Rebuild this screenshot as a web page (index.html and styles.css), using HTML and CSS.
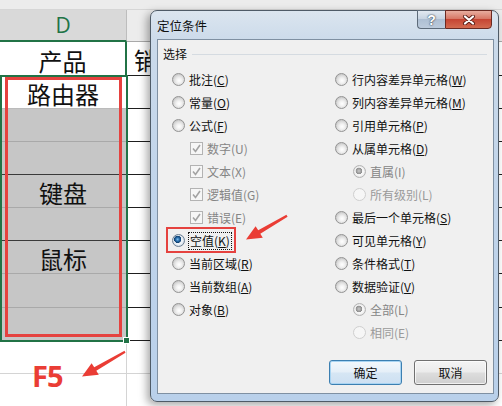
FILE: index.html
```html
<!DOCTYPE html>
<html lang="zh-CN">
  <head>
    <meta charset="UTF-8" />
    <title>定位条件</title>
    <link rel="stylesheet" href="styles.css">
  </head>
  <body>
    <div class="screen">
      <div class="sheet">
        <div class="topbar"></div>
        <div class="row head">
          <div class="cell d">D</div>
          <div class="cell e"></div>
        </div>
        <div class="row r-title">
          <div class="cell d">产品</div>
          <div class="cell e">销</div>
        </div>
        <div class="row r1"><div class="cell d">路由器</div><div class="cell e"></div></div>
        <div class="row r2"><div class="cell d sel line-light"></div><div class="cell e"></div></div>
        <div class="row r2"><div class="cell d sel line-dark"></div><div class="cell e"></div></div>
        <div class="row r2"><div class="cell d sel line-light">键盘</div><div class="cell e"></div></div>
        <div class="row r2"><div class="cell d sel line-dark"></div><div class="cell e"></div></div>
        <div class="row r2"><div class="cell d sel line-light">鼠标</div><div class="cell e"></div></div>
        <div class="row r2 tall"><div class="cell d sel line-light"></div><div class="cell e"></div></div>
        <div class="row r2"><div class="cell d sel"></div><div class="cell e"></div></div>
        <div class="row blank"><div class="cell d"></div><div class="cell e"></div></div>
        <div class="row blank"><div class="cell d"></div><div class="cell e"></div></div>
      </div>

      <div class="selection"></div>
      <div class="fill-handle"></div>
      <div class="mark-cells"></div>
      <div class="f5">F5</div>

      <div class="dialog">
        <div class="titlebar">
          <span class="title">定位条件</span>
          <div class="caption-btns">
            <span class="cap help">?</span>
            <span class="cap close">
              <svg width="14" height="10" viewBox="0 0 14 10">
                <path d="M3 1.5 L11 8.5 M11 1.5 L3 8.5" stroke="#5a1d16" stroke-width="4" stroke-linecap="round"/>
                <path d="M3 1.5 L11 8.5 M11 1.5 L3 8.5" stroke="#ffffff" stroke-width="2.2" stroke-linecap="round"/>
              </svg>
            </span>
          </div>
        </div>
        <div class="client">
          <div class="group-head">
            <span class="group-label">选择</span>
            <div class="group-line"></div>
          </div>
          <div class="options">
            <div class="col left">
              <div class="opt"><span class="radio"></span><span>批注(<u>C</u>)</span></div>
              <div class="opt"><span class="radio"></span><span>常量(<u>O</u>)</span></div>
              <div class="opt"><span class="radio"></span><span>公式(<u>F</u>)</span></div>
              <div class="opt sub dis"><span class="check"><svg width="11" height="11" viewBox="0 0 11 11"><path d="M2 5.5 L4.5 8.5 L9 2" fill="none" stroke="#a3a3a3" stroke-width="1.6"/></svg></span><span>数字(U)</span></div>
              <div class="opt sub dis"><span class="check"><svg width="11" height="11" viewBox="0 0 11 11"><path d="M2 5.5 L4.5 8.5 L9 2" fill="none" stroke="#a3a3a3" stroke-width="1.6"/></svg></span><span>文本(X)</span></div>
              <div class="opt sub dis"><span class="check"><svg width="11" height="11" viewBox="0 0 11 11"><path d="M2 5.5 L4.5 8.5 L9 2" fill="none" stroke="#a3a3a3" stroke-width="1.6"/></svg></span><span>逻辑值(G)</span></div>
              <div class="opt sub dis"><span class="check"><svg width="11" height="11" viewBox="0 0 11 11"><path d="M2 5.5 L4.5 8.5 L9 2" fill="none" stroke="#a3a3a3" stroke-width="1.6"/></svg></span><span>错误(E)</span></div>
              <div class="opt"><span class="radio on"></span><span class="focus">空值(<u>K</u>)</span></div>
              <div class="opt"><span class="radio"></span><span>当前区域(<u>R</u>)</span></div>
              <div class="opt"><span class="radio"></span><span>当前数组(<u>A</u>)</span></div>
              <div class="opt"><span class="radio"></span><span>对象(<u>B</u>)</span></div>
            </div>
            <div class="col right">
              <div class="opt"><span class="radio"></span><span>行内容差异单元格(<u>W</u>)</span></div>
              <div class="opt"><span class="radio"></span><span>列内容差异单元格(<u>M</u>)</span></div>
              <div class="opt"><span class="radio"></span><span>引用单元格(<u>P</u>)</span></div>
              <div class="opt"><span class="radio"></span><span>从属单元格(<u>D</u>)</span></div>
              <div class="opt sub dis"><span class="radio dis-on"></span><span>直属(I)</span></div>
              <div class="opt sub dis light"><span class="radio dis"></span><span>所有级别(L)</span></div>
              <div class="opt"><span class="radio"></span><span>最后一个单元格(<u>S</u>)</span></div>
              <div class="opt"><span class="radio"></span><span>可见单元格(<u>Y</u>)</span></div>
              <div class="opt"><span class="radio"></span><span>条件格式(<u>T</u>)</span></div>
              <div class="opt"><span class="radio"></span><span>数据验证(<u>V</u>)</span></div>
              <div class="opt sub dis"><span class="radio dis-on"></span><span>全部(L)</span></div>
              <div class="opt sub dis light"><span class="radio dis"></span><span>相同(E)</span></div>
            </div>
          </div>
          <div class="actions">
            <button class="btn default">确定</button>
            <button class="btn">取消</button>
          </div>
        </div>
      </div>

      <div class="mark-option"></div>
      <svg class="arrows" width="502" height="406" viewBox="0 0 502 406">
        <polygon points="124.5,350.8 94.2,367.2 91.6,363.2 82,376.5 98.8,374.8 96.3,370.8 125.5,352.8" fill="#ea3d35"/>
        <polygon points="286.4,214.8 258.2,230.3 255.6,226.3 246,239.5 262.8,237.8 260.3,233.8 287.6,216.8" fill="#ea3d35"/>
      </svg>
    </div>
  </body>
</html>
```

FILE: styles.css
```css
body {
  margin: 0;
  font-family: "Noto Sans CJK SC", sans-serif;
}
.screen {
  position: relative;
  width: 502px;
  height: 406px;
  overflow: hidden;
  background: #fff;
}

/* spreadsheet */
.topbar {
  height: 10px;
  background: #ececec;
  border-bottom: 1px solid #d6d6d6;
  box-sizing: border-box;
}
.row {
  display: flex;
  height: 33px;
}
.cell {
  box-sizing: border-box;
  display: flex;
  align-items: center;
  font-size: 24px;
  color: #111;
  border-bottom: 1px solid #d4d4d4;
}
.cell.d {
  width: 127px;
  justify-content: center;
  border-right: 1px solid #d4d4d4;
  padding-top: 3px;
}
.cell.e {
  flex: 1;
  padding-left: 7px;
  padding-top: 2px;
}
.head {
  height: 32px;
}
.head .cell.d {
  background: #d9d9d9;
  color: #217346;
  font-family: "Open Sans", "Liberation Sans", sans-serif;
  font-size: 21px;
  padding-top: 0;
  border-bottom: 2px solid #217346;
  border-right-color: #bdbdbd;
}
.head .cell.e {
  background: #ececec;
  border-bottom: 1px solid #a9a9a9;
}
.r-title {
  height: 34px;
}
.r-title .cell.d {
  border-right: 2px solid #217346;
}
.r-title .cell.e,
.r1 .cell.e,
.r2 .cell.e {
  border-bottom-color: #1e1e1e;
}
.r1 .cell.d {
  border-bottom-color: #bbbbbb;
}
.tall {
  height: 34px;
}
.cell.sel {
  background: #c6c6c6;
  border-bottom-color: #c6c6c6;
}
.cell.sel.line-light {
  border-bottom-color: #a9a9a9;
}
.cell.sel.line-dark {
  border-bottom-color: #3a3a3a;
}

/* overlays on the sheet */
.selection {
  position: absolute;
  left: 0;
  top: 75px;
  width: 128px;
  height: 267px;
  border: 2px solid #217346;
  box-sizing: border-box;
}
.fill-handle {
  position: absolute;
  left: 123px;
  top: 337px;
  width: 5px;
  height: 5px;
  background: #217346;
  border: 1px solid #fff;
}
.mark-cells {
  position: absolute;
  left: 5px;
  top: 77px;
  width: 117px;
  height: 260px;
  border: 3px solid #e5423f;
  box-sizing: border-box;
}
.f5 {
  position: absolute;
  left: 32px;
  top: 358px;
  font-family: "Noto Sans", sans-serif;
  font-weight: bold;
  font-size: 29px;
  line-height: 36px;
  letter-spacing: -1px;
  color: #ea3d35;
}

/* dialog window */
.dialog {
  position: absolute;
  left: 150px;
  top: 10px;
  width: 349px;
  height: 392px;
  box-sizing: border-box;
  border: 1px solid #4f5b67;
  border-radius: 7px;
  background: linear-gradient(180deg, #dbe5ef 0%, #cbdaea 8%, #c2d5ea 40%, #b9d0ea 100%);
  box-shadow: -3px 3px 8px rgba(0, 0, 0, 0.35);
  display: flex;
  flex-direction: column;
  padding: 0 4px 7px 6px;
}
.titlebar {
  height: 28px;
  display: flex;
  align-items: center;
  position: relative;
}
.title {
  font-size: 12.5px;
  color: #111;
  padding-top: 1px;
}
.caption-btns {
  position: absolute;
  right: 2px;
  top: -1px;
  display: flex;
}
.cap {
  height: 19px;
  box-sizing: border-box;
  display: flex;
  align-items: center;
  justify-content: center;
  border: 1px solid #5d6b7a;
}
.help {
  width: 28px;
  border-right: none;
  border-radius: 0 0 0 4px;
  background: linear-gradient(180deg, #e2e9f1 0%, #c7d4e2 45%, #aebfd3 50%, #bccbdc 100%);
  color: #fff;
  font-family: "Liberation Sans", sans-serif;
  font-weight: bold;
  font-size: 14px;
  text-shadow: 0 0 2px #34414f, 0 0 1px #34414f;
}
.close {
  width: 47px;
  border-color: #6b2a22;
  border-radius: 0 0 4px 0;
  background: linear-gradient(180deg, #e8ad9f 0%, #d77866 45%, #c64533 50%, #d36a4f 100%);
}
.client {
  flex: 1;
  background: #f0f0f0;
  border: 1px solid #7f90a2;
  display: flex;
  flex-direction: column;
  font-size: 12px;
  line-height: 16px;
  color: #111;
}
.group-head {
  height: 28px;
  display: flex;
  align-items: center;
  padding: 0 6px 0 5px;
}
.group-line {
  flex: 1;
  height: 0;
  margin-left: 5px;
  border-top: 1px solid #d5dbe1;
}
.options {
  display: flex;
}
.col {
  display: flex;
  flex-direction: column;
}
.col.left {
  width: 177px;
  padding-left: 14px;
  box-sizing: border-box;
}
.opt {
  height: 23px;
  display: flex;
  align-items: center;
  gap: 4px;
  white-space: nowrap;
}
.opt.sub {
  margin-left: 18px;
}
.opt.dis {
  color: #858585;
}
.opt.light {
  color: #9a9a9a;
}
.opt u {
  text-underline-offset: 1px;
}
.focus {
  outline: 1px dotted #111;
  outline-offset: 0;
  padding: 0 1px;
}

/* windows 7 style radio and check */
.radio {
  width: 13px;
  height: 13px;
  box-sizing: border-box;
  border-radius: 50%;
  border: 1px solid #939393;
  background: radial-gradient(circle at 55% 60%, #ffffff 0, #f2f2f2 2.5px, #dcdcdc 5px, #cdcdcd 6px);
  flex: none;
}
.radio.on {
  border-color: #6c7f93;
  background:
    radial-gradient(circle at 42% 40%, #7fc0ee 0, #2a6fae 1.8px, #0d3e6c 3.4px, rgba(13, 62, 108, 0) 3.8px),
    radial-gradient(circle, #eef3f8 0 4px, #c8d3de 6px);
}
.radio.dis-on {
  border-color: #b4b4b4;
  background:
    radial-gradient(circle at 45% 45%, #c9c9c9 0, #8f8f8f 3px, rgba(143, 143, 143, 0) 3.6px),
    radial-gradient(circle, #f7f7f7 0 4px, #dedede 6px);
}
.radio.dis {
  border-color: #cfcfcf;
  background: #f6f6f6;
}
.check {
  width: 13px;
  height: 13px;
  box-sizing: border-box;
  border: 1px solid #b3b3b3;
  background: #f6f6f6;
  display: flex;
  align-items: center;
  justify-content: center;
  flex: none;
}

.actions {
  display: flex;
  justify-content: flex-end;
  gap: 12px;
  padding-right: 6px;
  margin-top: 16px;
}
.btn {
  width: 73px;
  height: 25px;
  font-family: "Noto Sans CJK SC", sans-serif;
  font-size: 12px;
  color: #111;
  border: 1px solid #707070;
  border-radius: 3px;
  background: linear-gradient(180deg, #f4f4f4 0%, #ebebeb 48%, #dddddd 52%, #cfcfcf 100%);
  box-shadow: inset 0 0 0 1px rgba(255, 255, 255, 0.7);
  padding: 0;
}
.btn.default {
  border-color: #3c7fb1;
  background: linear-gradient(180deg, #f3f8fc 0%, #e5eff8 48%, #d6e6f4 52%, #cde0f2 100%);
  box-shadow: inset 0 0 0 1px #a8d4f2;
}

.mark-option {
  position: absolute;
  left: 166px;
  top: 227px;
  width: 70px;
  height: 26px;
  border: 2.5px solid #e5423f;
  box-sizing: border-box;
}
.arrows {
  position: absolute;
  left: 0;
  top: 0;
  pointer-events: none;
}
```
